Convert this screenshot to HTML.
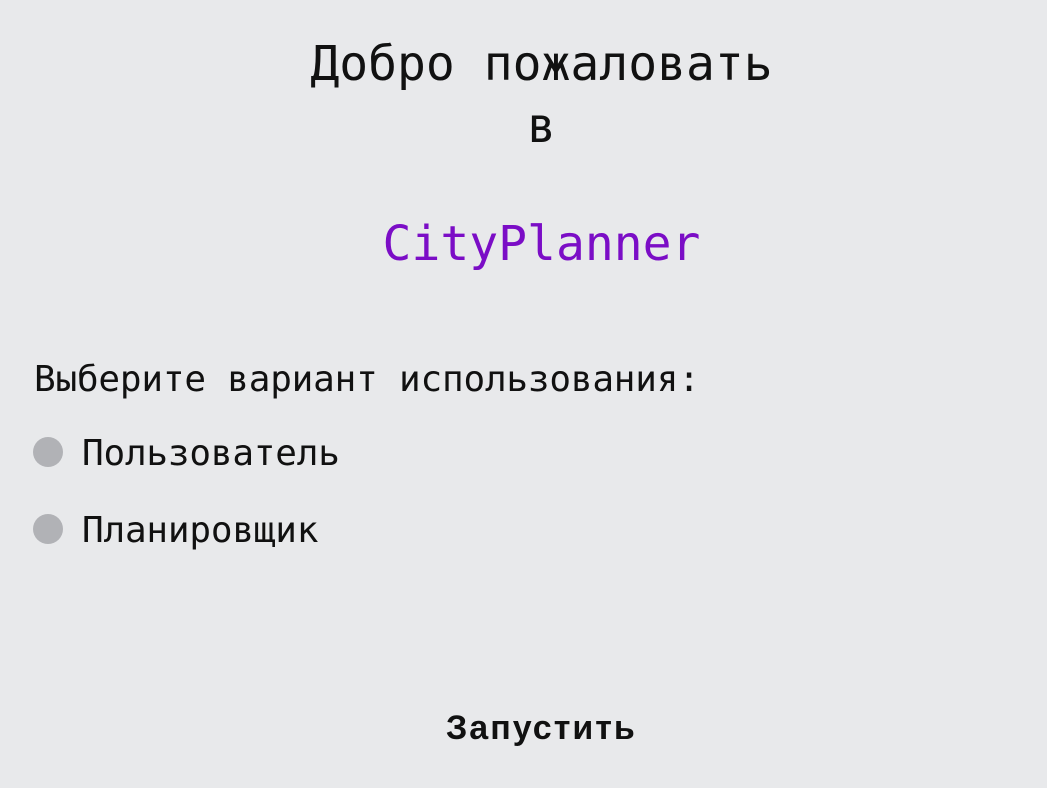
<!DOCTYPE html>
<html><head><meta charset="utf-8"><style>
html,body{margin:0;padding:0;width:1047px;height:788px;background:#e8e9eb;overflow:hidden}
.t{position:absolute;white-space:nowrap;font-family:"DejaVu Sans Mono","Liberation Mono",monospace;color:#111;line-height:1}
.c{left:18px;width:1047px;text-align:center}
.h{font-size:48px}
.m{font-size:36px;letter-spacing:-0.2px}
.dot{position:absolute;left:33px;width:30px;height:30px;border-radius:50%;background:#b1b2b6}
</style></head><body>
<div class="t c h" style="top:40px">Добро пожаловать</div>
<div class="t c h" style="top:102px">в</div>
<div class="t c h" style="top:220px;color:#7b0dc6">CityPlanner</div>
<div class="t m" style="left:34px;top:362px">Выберите вариант использования:</div>
<div class="dot" style="top:437px"></div>
<div class="t m" style="left:82px;top:436px">Пользователь</div>
<div class="dot" style="top:514px"></div>
<div class="t m" style="left:82px;top:513px">Планировщик</div>
<div class="t" style="left:446px;top:711px;font-family:'Liberation Sans',sans-serif;font-weight:bold;font-size:34px;letter-spacing:2px">Запустить</div>
</body></html>
